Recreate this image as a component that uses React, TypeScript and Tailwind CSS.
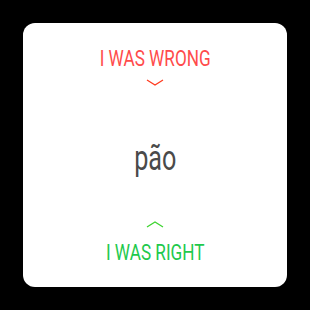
const Chevron = ({ up, className }: { up?: boolean; className: string }) => (
  <svg width="18" height="7" viewBox="0 0 18 7" className={className}>
    <polyline
      points={up ? '1,6 9,1 17,6' : '1,1 9,6 17,1'}
      fill="none"
      stroke="currentColor"
      strokeWidth="1.3"
    />
  </svg>
);

export default function App() {
  return (
    <div className="w-[310px] h-[310px] bg-black flex items-center justify-center font-['Roboto',sans-serif]">
      <div className="w-[264px] h-[264px] bg-white rounded-[12px] flex flex-col items-center">
        <div className="mt-[24px] text-[22px] leading-[24px] text-[#ff4b4b] scale-x-[0.78] whitespace-nowrap">I WAS WRONG</div>
        <Chevron className="mt-[8px] text-[#ff3a1e]" />
        <div className="mt-[53px] text-[35px] leading-[40px] text-[#4a4a4a] scale-x-[0.72]">pão</div>
        <Chevron up className="mt-[42px] text-[#3dd42f]" />
        <div className="mt-[13px] text-[22px] leading-[24px] text-[#1ec94c] scale-x-[0.78] whitespace-nowrap">I WAS RIGHT</div>
      </div>
    </div>
  );
}
